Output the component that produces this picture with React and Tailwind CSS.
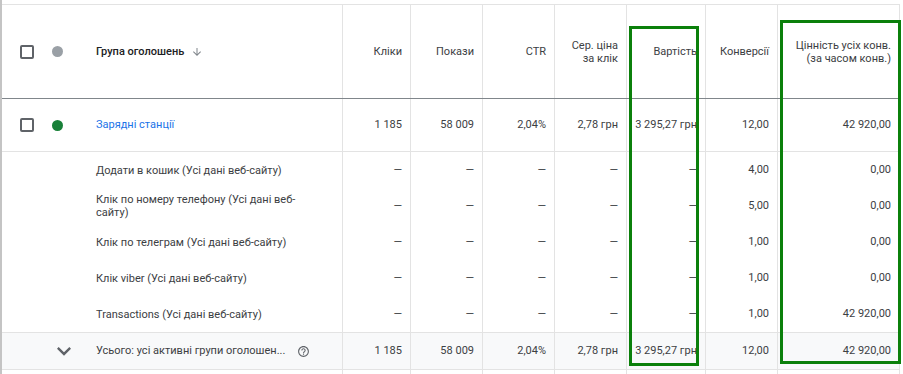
import React from "react";

const COLS = "grid grid-cols-[340px_68px_72px_72px_72px_79px_72px_123px]";

const subRows = [
  { label: "Додати в кошик (Усі дані веб-сайту)", conv: "4,00", value: "0,00" },
  { label: "Клік по номеру телефону (Усі дані веб-сайту)", conv: "5,00", value: "0,00" },
  { label: "Клік по телеграм (Усі дані веб-сайту)", conv: "1,00", value: "0,00" },
  { label: "Клік viber (Усі дані веб-сайту)", conv: "1,00", value: "0,00" },
  { label: "Transactions (Усі дані веб-сайту)", conv: "1,00", value: "42 920,00" },
];

function Num({ children, last }) {
  return (
    <div
      className={
        "flex items-center justify-end border-l border-[#e3e3e3] pr-2 text-right whitespace-nowrap" +
        (last ? " border-r" : "")
      }
    >
      {children}
    </div>
  );
}

function Checkbox() {
  return <div className="ml-[18px] h-[14px] w-[14px] shrink-0 rounded-[2px] border-2 border-[#5f6368]" />;
}

export default function App() {
  const dash = "—";
  return (
    <div className="relative flex h-[374px] w-[903px] overflow-hidden bg-white font-['Roboto',sans-serif] text-[11px] text-[#3c4043]">
      <div className="w-[2px] shrink-0 bg-[#c4c4c4]" />

      <div className="w-[898px] pt-[4px]">
        <div className="border-t border-[#e3e3e3]">
          {/* header */}
          <div className={COLS + " h-[94px] border-b border-[#80868b] leading-[13px]"}>
            <div className="flex items-center">
              <Checkbox />
              <div className="ml-[18px] h-[11px] w-[11px] shrink-0 rounded-full bg-[#9aa0a6]" />
              <div className="ml-[33px] flex items-center gap-[7px] font-medium text-[#202124]">
                Група оголошень
                <svg width="12" height="12" viewBox="0 0 24 24" fill="#80868b">
                  <path d="M20 12l-1.41-1.41L13 16.17V4h-2v12.17l-5.58-5.59L4 12l8 8 8-8z" />
                </svg>
              </div>
            </div>
            <Num>Кліки</Num>
            <Num>Покази</Num>
            <Num>CTR</Num>
            <Num>
              Сер. ціна
              <br />
              за клік
            </Num>
            <Num>Вартість</Num>
            <Num>Конверсії</Num>
            <Num last>
              Цінність усіх конв.
              <br />
              (за часом конв.)
            </Num>
          </div>

          {/* ad group row */}
          <div className={COLS + " h-[53px] border-b border-[#e3e3e3]"}>
            <div className="flex items-center">
              <Checkbox />
              <div className="ml-[18px] h-[11px] w-[11px] shrink-0 rounded-full bg-[#188038]" />
              <div className="ml-[33px] text-[#1a73e8]">Зарядні станції</div>
            </div>
            <Num>1 185</Num>
            <Num>58 009</Num>
            <Num>2,04%</Num>
            <Num>2,78 грн</Num>
            <Num>3 295,27 грн</Num>
            <Num>12,00</Num>
            <Num last>42 920,00</Num>
          </div>

          {/* conversion actions */}
          {subRows.map((r) => (
            <div key={r.label} className={COLS + " h-[36px]"}>
              <div className="flex items-center pl-[94px]">
                <div className="w-[212px] leading-[13px]">{r.label}</div>
              </div>
              <Num>{dash}</Num>
              <Num>{dash}</Num>
              <Num>{dash}</Num>
              <Num>{dash}</Num>
              <Num>{dash}</Num>
              <Num>{r.conv}</Num>
              <Num last>{r.value}</Num>
            </div>
          ))}

          {/* total */}
          <div className={COLS + " h-[38px] border-y border-[#e3e3e3] bg-[#f8f9fa]"}>
            <div className="flex items-center">
              <svg className="ml-[48px] shrink-0" width="28" height="28" viewBox="0 0 24 24" fill="#5f6368">
                <path d="M16.59 8.59L12 13.17 7.41 8.59 6 10l6 6 6-6z" />
              </svg>
              <div className="ml-[18px] whitespace-nowrap">Усього: усі активні групи оголошен...</div>
              <svg className="ml-[12px] shrink-0" width="13" height="13" viewBox="0 0 24 24" fill="#5f6368">
                <path d="M11 18h2v-2h-2v2zm1-16C6.48 2 2 6.48 2 12s4.48 10 10 10 10-4.48 10-10S17.52 2 12 2zm0 18c-4.41 0-8-3.59-8-8s3.59-8 8-8 8 3.59 8 8-3.59 8-8 8zm0-14c-2.21 0-4 1.79-4 4h2c0-1.1.9-2 2-2s2 .9 2 2c0 2-3 1.75-3 5h2c0-2.25 3-2.5 3-5 0-2.21-1.79-4-4-4z" />
              </svg>
            </div>
            <Num>1 185</Num>
            <Num>58 009</Num>
            <Num>2,04%</Num>
            <Num>2,78 грн</Num>
            <Num>3 295,27 грн</Num>
            <Num>12,00</Num>
            <Num last>42 920,00</Num>
          </div>

          {/* next row (cut off) */}
          <div className={COLS + " h-[20px]"}>
            <div />
            <Num />
            <Num />
            <Num />
            <Num />
            <Num />
            <Num />
            <Num last />
          </div>
        </div>
      </div>

      {/* annotation frames */}
      <div className="pointer-events-none absolute left-[629px] top-[26px] h-[340px] w-[70px] border-[3px] border-[#0b800b]" />
      <div className="pointer-events-none absolute left-[780px] top-[20px] h-[344px] w-[121px] border-[3px] border-[#0b800b]" />
    </div>
  );
}
